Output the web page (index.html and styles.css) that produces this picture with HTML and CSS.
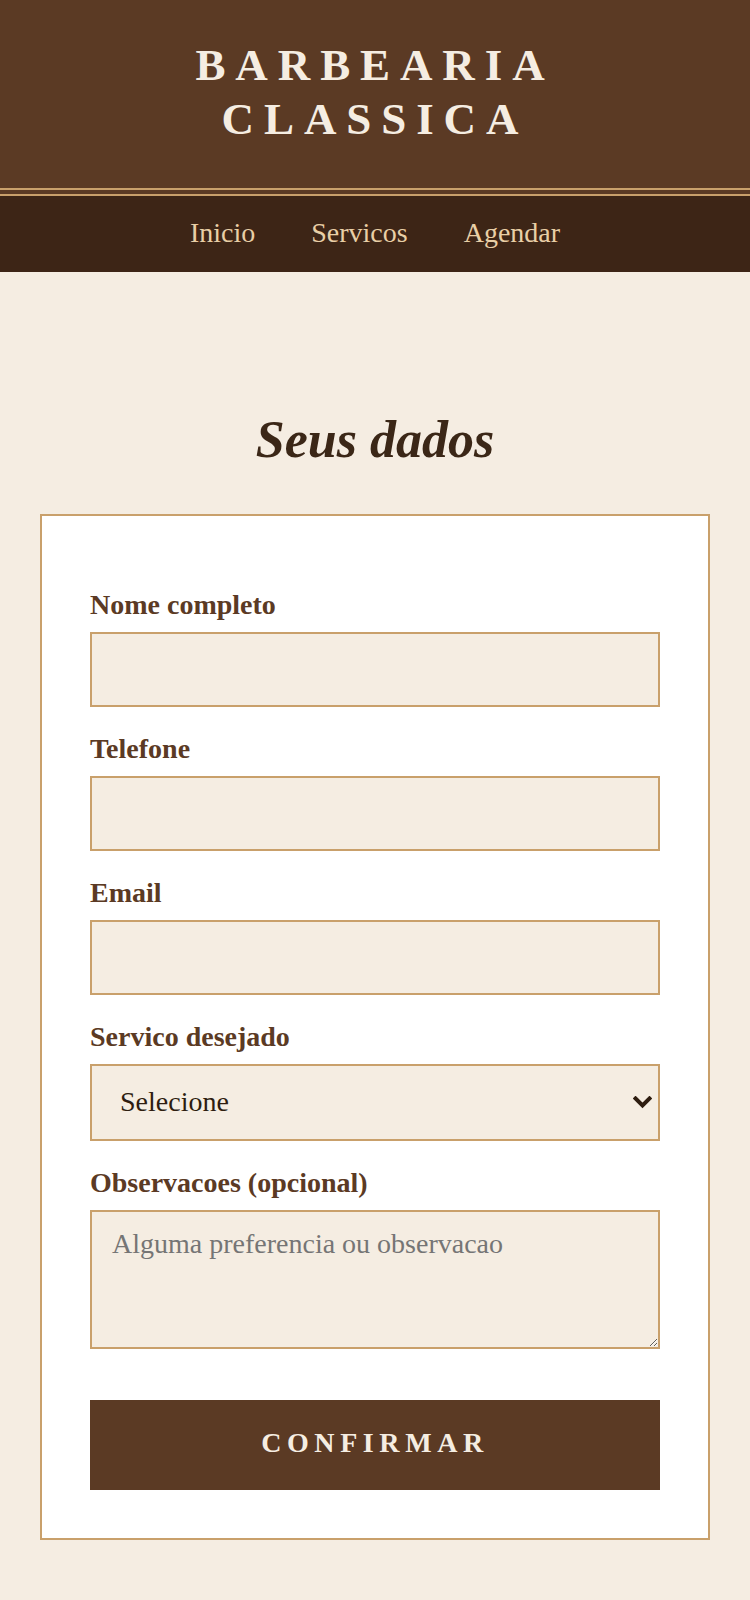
FILE: index.html
```html
<!DOCTYPE html>
<html lang="pt">
<head>
<meta charset="utf-8">
<title>Barbearia Classica</title>
<link rel="stylesheet" href="styles.css">
</head>
<body>
<header class="site-header">
  <h1 class="brand">BARBEARIA<br>CLASSICA</h1>
</header>
<nav class="site-nav">
  <a href="#" class="nav-link">Inicio</a>
  <a href="#" class="nav-link">Servicos</a>
  <a href="#" class="nav-link">Agendar</a>
</nav>
<main class="content">
  <h2 class="section-title">Seus dados</h2>
  <form class="card">
    <div class="field">
      <label class="field-label" for="nome">Nome completo</label>
      <input class="field-input" id="nome" type="text">
    </div>
    <div class="field">
      <label class="field-label" for="tel">Telefone</label>
      <input class="field-input" id="tel" type="tel">
    </div>
    <div class="field">
      <label class="field-label" for="email">Email</label>
      <input class="field-input" id="email" type="email">
    </div>
    <div class="field">
      <label class="field-label" for="servico">Servico desejado</label>
      <div class="select-wrap">
        <select class="field-input field-select" id="servico">
          <option>Selecione</option>
        </select>
        <svg class="select-arrow" width="19" height="13" viewBox="0 0 19 13" aria-hidden="true">
          <polyline points="2.5,2.5 9.5,9.5 16.5,2.5" fill="none" stroke="#2e1d10" stroke-width="4" stroke-linecap="square"/>
        </svg>
      </div>
    </div>
    <div class="field">
      <label class="field-label" for="obs">Observacoes (opcional)</label>
      <textarea class="field-input field-textarea" id="obs" placeholder="Alguma preferencia ou observacao"></textarea>
    </div>
    <button class="submit" type="button">CONFIRMAR</button>
  </form>
</main>
</body>
</html>
```

FILE: styles.css
```css
* { box-sizing: border-box; }

body {
  margin: 0;
  background: #f5ede2;
  font-family: "Liberation Serif", "Times New Roman", serif;
  color: #3b2717;
}

.site-header {
  background: #5b3a24;
  padding: 38px 20px 48px;
  border-bottom: 2px solid #c9a06b;
  box-shadow: inset 0 -4px 0 #5b3a24, inset 0 -6px 0 #c9a06b;
  text-align: center;
}

.brand {
  margin: 0;
  font-size: 45px;
  line-height: 54px;
  font-weight: bold;
  letter-spacing: 0.22em;
  color: #f5ede2;
}

.site-nav {
  background: #3d2516;
  display: flex;
  justify-content: center;
  gap: 56px;
  padding: 21px 0 23px;
}

.nav-link {
  font-size: 28px;
  line-height: 32px;
  color: #e9cfa6;
  text-decoration: none;
}

.content {
  padding: 138px 40px 61px;
}

.section-title {
  margin: 0 0 44px;
  font-size: 52px;
  line-height: 60px;
  font-style: italic;
  font-weight: bold;
  text-align: center;
  color: #3b2717;
}

.card {
  background: #ffffff;
  border: 2px solid #c9a06b;
  padding: 73px 48px 48px;
}

.field {
  margin-bottom: 26px;
}

.field-label {
  display: block;
  font-size: 28px;
  line-height: 32px;
  font-weight: bold;
  color: #5b3a24;
  margin-bottom: 11px;
}

.field-input {
  display: block;
  width: 100%;
  height: 75px;
  margin: 0;
  padding: 0 20px;
  border: 2px solid #c9a06b;
  border-radius: 0;
  background: #f5ede2;
  font-family: "Liberation Serif", "Times New Roman", serif;
  font-size: 28px;
  color: #2e1d10;
  outline: none;
}

.select-wrap {
  position: relative;
}

.field-select {
  -webkit-appearance: none;
  appearance: none;
  height: 77px;
  padding: 0 48px 2px 28px;
}

.select-arrow {
  position: absolute;
  right: 8px;
  top: 32px;
  pointer-events: none;
}

.field-textarea {
  height: 139px;
  padding: 16px 20px;
  line-height: 32px;
  resize: vertical;
}

.field-textarea::placeholder {
  color: #757575;
}

.submit {
  display: block;
  width: 100%;
  height: 90px;
  margin-top: 51px;
  padding: 0 0 4px;
  border: none;
  border-radius: 0;
  background: #5b3a24;
  color: #f5ede2;
  font-family: "Liberation Serif", "Times New Roman", serif;
  font-size: 28px;
  font-weight: bold;
  letter-spacing: 0.2em;
  cursor: pointer;
}
```
